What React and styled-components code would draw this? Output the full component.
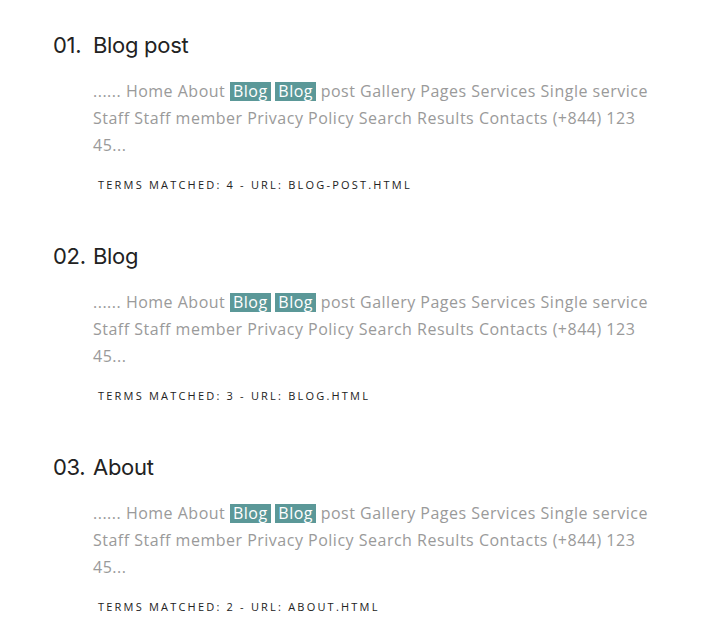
import styled, { createGlobalStyle } from "styled-components";

const GlobalStyle = createGlobalStyle`
  body {
    margin: 0;
    background: #ffffff;
    font-family: "Open Sans", "Liberation Sans", sans-serif;
  }
`;

const Page = styled.div`
  padding: 30px 40px 0 53px;
  width: 716px;
  box-sizing: border-box;
`;

const Result = styled.div`
  margin-bottom: 49px;

  &:last-child {
    margin-bottom: 0;
  }
`;

const Heading = styled.h3`
  display: flex;
  margin: 0 0 18px;
  font-family: "Inter", "Liberation Sans", sans-serif;
  font-weight: 400;
  font-size: 22px;
  line-height: 30px;
  color: #222222;
  letter-spacing: -0.3px;
`;

const Num = styled.span`
  width: 40px;
  flex-shrink: 0;
`;

const Body = styled.div`
  padding-left: 40px;
  max-width: 570px;
`;

const Excerpt = styled.p`
  margin: 0;
  font-size: 16px;
  line-height: 27px;
  color: #9a9a9a;
  letter-spacing: 0.5px;
`;

const Mark = styled.span`
  display: inline-block;
  background: #5b9898;
  color: #ffffff;
  padding: 0 3px;
  line-height: 19px;
`;

const Meta = styled.div`
  margin-top: 18px;
  padding-left: 5px;
  font-size: 11px;
  letter-spacing: 2.2px;
  text-transform: uppercase;
  color: #222222;
`;

const results = [
  { n: "01.", title: "Blog post", terms: 4, url: "blog-post.html" },
  { n: "02.", title: "Blog", terms: 3, url: "blog.html" },
  { n: "03.", title: "About", terms: 2, url: "about.html" },
];

export default function App() {
  return (
    <>
      <GlobalStyle />
      <Page>
        {results.map((r) => (
          <Result key={r.n}>
            <Heading>
              <Num>{r.n}</Num>
              {r.title}
            </Heading>
            <Body>
              <Excerpt>
                ...... Home About <Mark>Blog</Mark> <Mark>Blog</Mark> post
                Gallery Pages Services Single service Staff Staff member
                Privacy Policy Search Results Contacts (+844) 123 45...
              </Excerpt>
              <Meta>
                Terms matched: {r.terms} - URL: {r.url}
              </Meta>
            </Body>
          </Result>
        ))}
      </Page>
    </>
  );
}
